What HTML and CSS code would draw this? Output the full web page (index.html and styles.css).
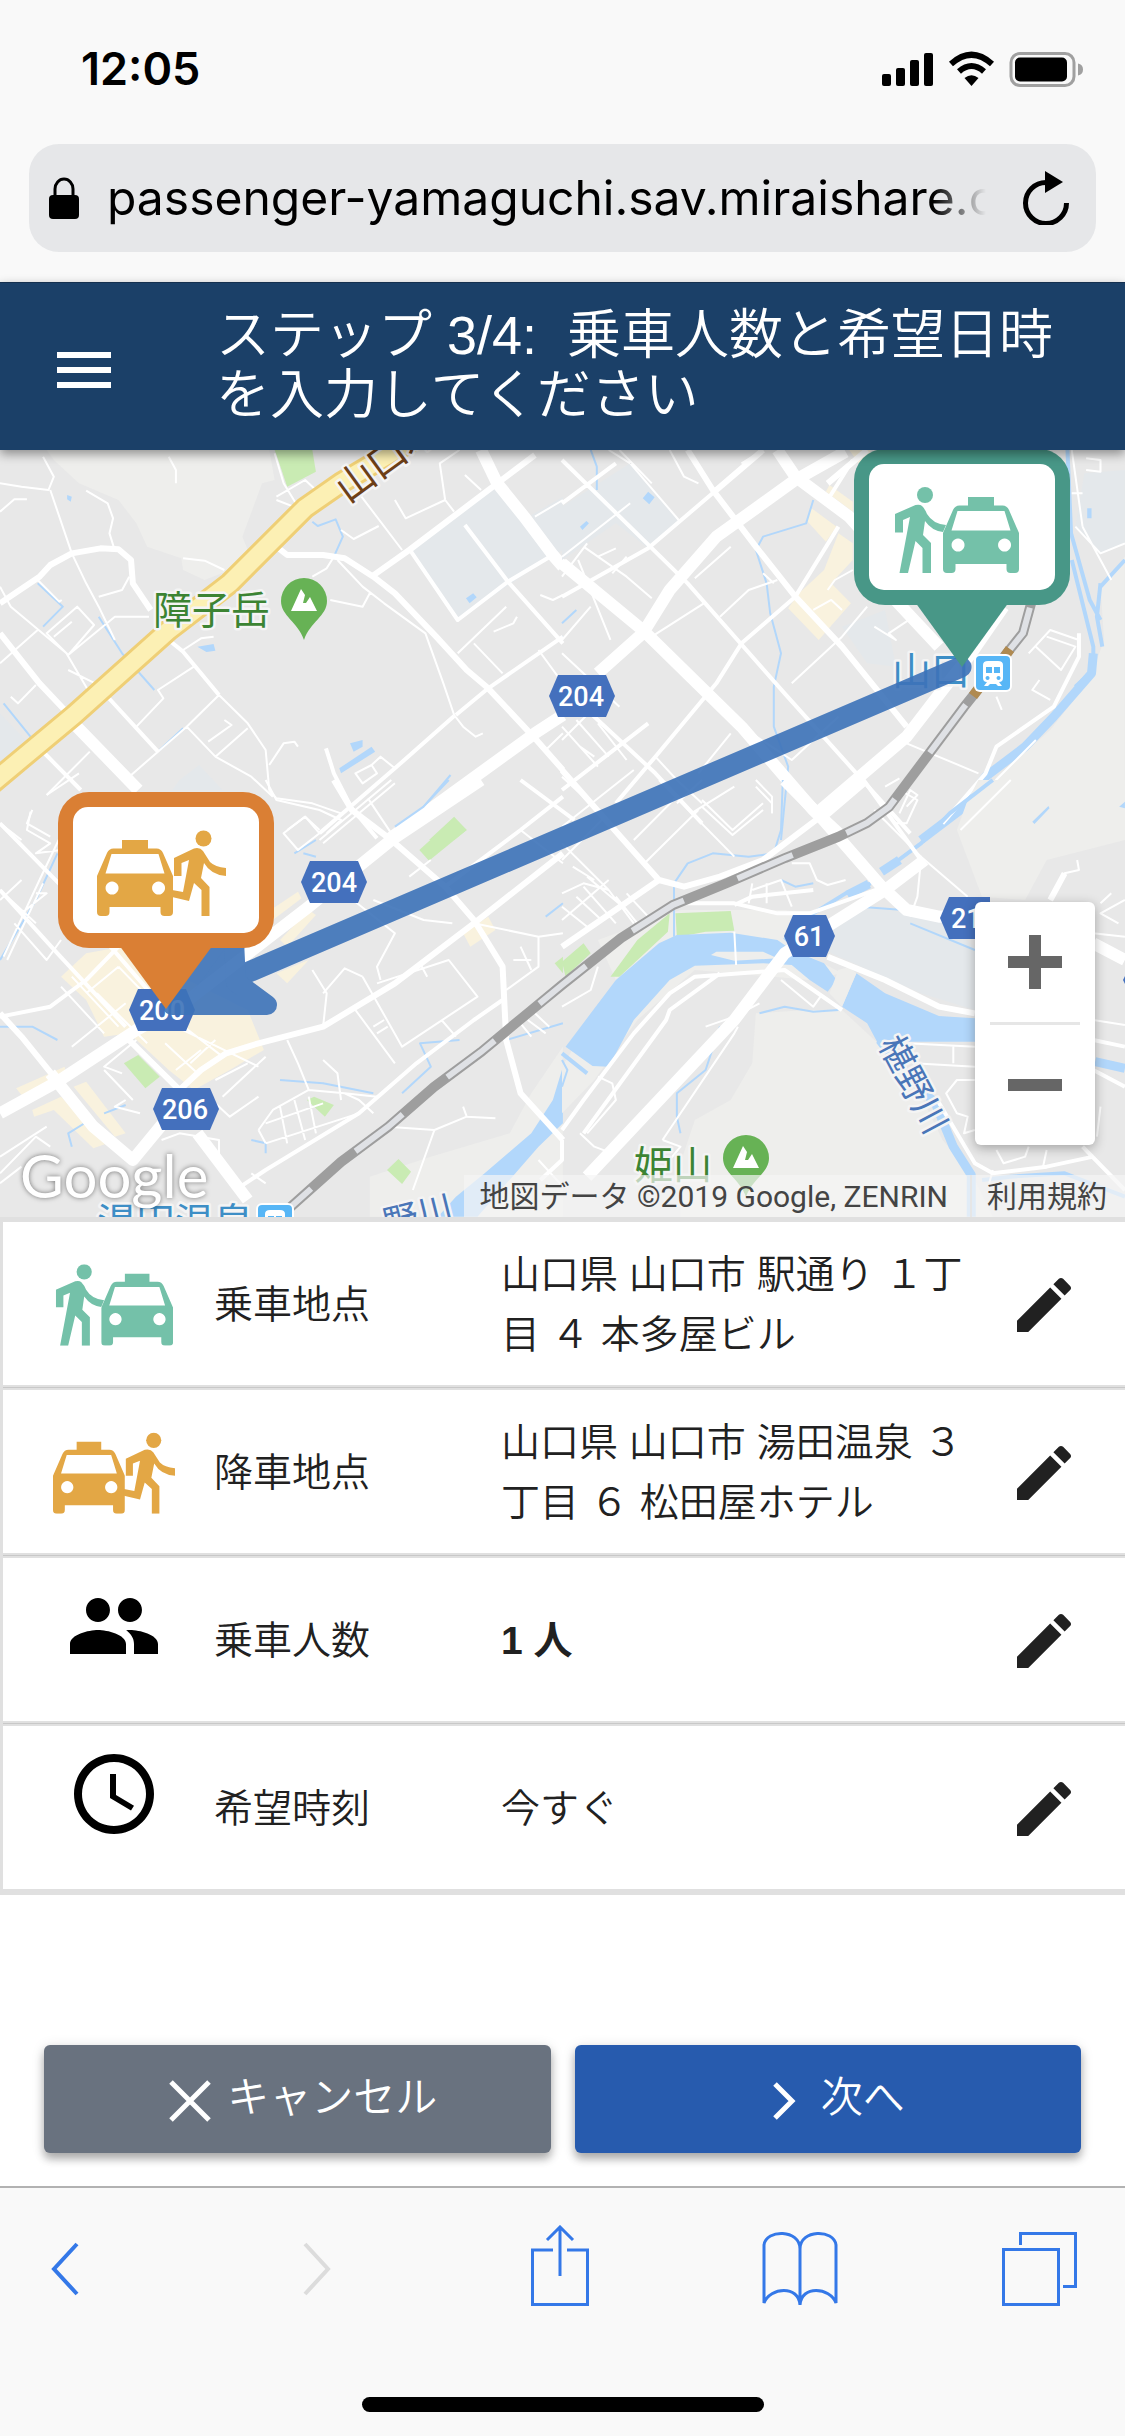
FILE: index.html
```html
<!DOCTYPE html>
<html lang="ja">
<head>
<meta charset="utf-8">
<meta name="viewport" content="width=device-width">
<title>ステップ 3/4</title>
<link rel="stylesheet" href="styles.css">
</head>
<body>
<svg class="defs" aria-hidden="true">
  <symbol id="car" viewBox="0 0 76 86">
    <path fill-rule="evenodd" d="M25 10H51V18.500H59.500Q64 18.500 66 23L76 46V82Q76 86 72 86H67.500Q63.500 86 63.500 82V77H12.500V82Q12.500 86 8.500 86H4Q0 86 0 82V46L10 23Q12 18.500 16.500 18.500H25ZM14.500 24L8.500 43.500H67.500L61.500 24ZM15 51.500a6.500 6.500 0 1 0 .1 0ZM61.500 51.500a6.500 6.500 0 1 0 .1 0Z"/>
  </symbol>
  <symbol id="ride" viewBox="0 0 124 86">
    <use href="#car" x="48" y="0" width="76" height="86"/>
    <circle cx="30" cy="8" r="8"/>
    <path d="M0 27L20.500 18Q25 17 27 19Q30 22 32 27Q38 37 51 38L48 45Q37 44 30 34L28 48L36 56V86H27.500V61L20.500 54L13 86H4.500L15 30L8 33V45.500H0Z"/>
  </symbol>
  <symbol id="leave" viewBox="0 0 129 86">
    <use href="#car" x="0" y="0" width="76" height="86"/>
    <circle cx="106.500" cy="8.500" r="8"/>
    <path d="M77 28L97 18.500Q103 17 106 21L113 32Q118 37 129 38V46Q114 45 107 33L104 48L112.500 57V86H104.500V60L97 53L92 71L75 67V60L86 62L92 30L84.500 33V46H77Z"/>
  </symbol>
  <symbol id="edit" viewBox="0 0 24 24">
    <path d="M3 17.250V21h3.750L17.810 9.940l-3.750-3.750L3 17.250zM20.710 7.040c.39-.39.39-1.020 0-1.410l-2.340-2.340c-.39-.39-1.020-.39-1.410 0l-1.830 1.830 3.750 3.750 1.830-1.830z"/>
  </symbol>
  <symbol id="peak" viewBox="0 0 46 62">
    <path d="M23 0a23 23 0 0 1 23 23c0 15-17 21-23 39c-6-18-23-24-23-39a23 23 0 0 1 23-23z" fill="#67b255"/>
    <path d="M10 33L20 11L24 17L22 25L25 25L29 19L36 33z" fill="#fff"/>
  </symbol>
  <symbol id="train" viewBox="0 0 34 34">
    <rect width="34" height="34" rx="4" fill="#57b6f6"/>
    <path fill-rule="evenodd" fill="#fff" d="M7 9Q7 5 12 5H22Q27 5 27 9V22Q27 26 23 26L26 30H22L20 28H14L12 30H8L11 26Q7 26 7 22ZM10 11V17H16V11ZM18 11V17H24V11ZM11.500 20a2 2 0 1 0 .1 0ZM22.500 20a2 2 0 1 0 .1 0Z"/>
  </symbol>
</svg>

<header class="browser-top">
  <div class="status">
    <span class="clock">12:05</span>
    <svg class="status-icons" viewBox="0 0 202 36" aria-hidden="true">
      <rect x="0" y="23" width="9" height="12" rx="2"/><rect x="14" y="17" width="9" height="18" rx="2"/>
      <rect x="28" y="9" width="9" height="26" rx="2"/><rect x="42" y="2" width="9" height="33" rx="2"/>
      <path d="M89.500 35L82.500 27Q89.500 21.500 96.500 27Z"/>
      <g fill="none" stroke="#000" stroke-width="6"><path d="M77 20.500Q89.500 9.500 102 20.500"/><path d="M69 13Q89.500 -5.500 110 13"/></g>
      <rect x="129" y="2.500" width="63" height="32" rx="9" fill="none" stroke="#a0a0a0" stroke-width="3"/>
      <rect x="133" y="6.500" width="52" height="24" rx="5"/>
      <path d="M196 12.500q5 1 5 6t-5 6z" fill="#a0a0a0"/>
    </svg>
  </div>
  <div class="address">
    <svg class="lock" viewBox="0 0 30 42" aria-hidden="true"><rect y="18" width="30" height="24" rx="4"/><path d="M6 20V12a9 10 0 0 1 18 0V20" fill="none" stroke="#000" stroke-width="3"/></svg>
    <input class="url" type="text" aria-label="アドレス" value="passenger-yamaguchi.sav.miraishare.c" readonly>
    <button class="reload" type="button" aria-label="再読み込み">
      <svg viewBox="0 0 48 54"><path d="M24 11.500A20.500 20.500 0 1 0 44.500 32" fill="none" stroke="#000" stroke-width="5"/><path d="M23 0L41 11L23 22Z"/></svg>
    </button>
  </div>
</header>

<header class="app-bar">
  <button class="menu" type="button" aria-label="メニュー"><svg viewBox="0 0 24 24"><path d="M3 18h18v-2H3v2zm0-5h18v-2H3v2zm0-7v2h18V6H3z"/></svg></button>
  <h1>ステップ 3/4:&nbsp; 乗車人数と希望日時を入力してください</h1>
</header>

<main>
<section class="map" aria-label="地図">
<svg class="map-canvas" viewBox="0 450 1125 767">
  <rect y="450" width="1125" height="767" fill="#e8e8e8"/>

  <!-- north-west -->
  <g class="tile" transform="translate(0 440) scale(.359 .33333)">
    <path class="hill" d="M130 30H750L765 120L730 130L675 290L690 330L640 390L570 420L510 390L505 355L410 320L380 250L330 180L220 130L150 60Z"/>
    <path class="park" d="M765 30H870L880 95L800 140L775 60ZM1195 1200L1265 1130L1300 1170L1265 1200Z"/>
    <path class="block" d="M1145 330L1380 135L1540 345L1275 540ZM1480 225L1568 170V330L1540 345ZM0 820L80 910L0 980ZM500 1020L555 975L620 1050H480Z"/>
    <path class="stream" d="M870 245L885 258L935 238L955 290L930 350M105 430L175 500L120 560M275 530L340 640L430 750M10 790L85 890M445 930L510 865M1255 1005L1180 1100L1115 1160M1370 740L1568 590"/>
    <path class="water" d="M550 620L595 612L600 632L575 636ZM945 985L1035 920L1045 935L950 1000ZM975 910L1010 900V920L985 935ZM1298 475L1318 460L1328 472L1308 490ZM187 165L200 170L197 185L187 178Z"/>
    <path class="r3" d="M0 130L60 140L135 150L150 110L120 50M0 215L40 178H75M140 150L200 340L240 430L275 500L320 600M240 152L300 190L315 235L305 280L318 325M470 50L490 90V130M105 420L165 485L172 480M0 440L30 500L185 640L245 750M0 670L105 570M130 580L215 500L262 555L190 645ZM190 645L320 530H415M150 590L200 545M30 770L50 790L100 735M360 1010L440 935L520 860L610 765M610 765L690 850L740 930L750 1050L770 1075L870 1090L950 1120M520 860L600 950L700 1010L760 1070M600 950L690 865M380 860L455 775L440 750L540 680M130 1065L250 935M580 905L645 855L625 840M750 975L790 910L820 905L830 920M510 355L570 362L625 390M275 470L340 450L360 410M510 630L560 595L595 590M190 690L265 730M940 360L1010 440L1070 490L1185 580L1205 640L1235 730L1265 825L1290 860L1325 890L1345 880M1000 160L1120 330M950 270L985 297L1055 258M1100 180L1130 235L1240 180L1265 215M1240 180L1225 70L1280 30M870 410L910 385L930 350M920 480L1010 500L1030 460M1320 610L1400 700M1275 640L1410 500M1375 575L1430 550L1440 530M1500 630L1568 730M1490 230L1568 180M1295 105L1340 150M1025 1075L1090 1180M990 1000L1035 975L1050 1000L1010 1030ZM1035 975L1060 950L1100 985M770 170L850 120L900 170M765 40L790 130L830 200M770 180L830 205M800 1170L850 1130L890 1170M1505 465L1540 480L1568 465M1520 930L1568 880M0 1150L60 1200M90 1110L75 1150L140 1190"/>
    <path class="r4" d="M890 1180L1100 985L1265 828M1270 825L1360 745L1568 590M115 930L225 1050M295 765L440 935M470 600L510 635L610 765M1145 335L1275 540L1415 425L1540 345M1295 255L1415 425L1568 610M908 925L930 1000L980 1105L1050 1195"/>
    <path class="r6" d="M0 490L110 410L140 375L200 340L280 325L330 328L365 360L370 430L420 510M0 580L110 730L180 810M770 320L800 345H900L960 355L1040 410L1100 460L1215 590L1300 690L1360 745L1490 895L1568 990M1035 410L1140 330L1385 130L1490 45"/>
    <path class="r12" d="M205 850L385 1050M1340 30L1385 130L1460 230L1540 345L1568 380M1080 1200L1490 880L1568 825"/>
  </g>

  <!-- north-east -->
  <g class="tile" transform="translate(562 440) scale(.359 .33333)">
    <path class="block" d="M0 200L190 70L325 240L240 325L150 250L0 360ZM1455 100L1568 90V310L1495 340L1430 260ZM780 560L900 510L930 680L850 670Z"/>
    <path class="hill" d="M1568 350L1500 440L1510 600L1470 720L1360 870L1210 1010L1110 1200H1568Z"/>
    <path class="shop" d="M735 155L745 135L810 185V215ZM695 205L765 260L735 305L680 240ZM770 280L810 310V360L750 430L805 490L715 600L630 505L660 460L730 390ZM800 30H860L840 90Z"/>
    <path class="stream" d="M700 180L680 250L560 290L540 330L570 430L580 520L610 640L590 740V860L630 980L610 1200M80 30L97 80V150M0 550L40 510"/>
    <path class="stream wide" d="M1408 30L1418 280L1470 480L1500 540M1500 430L1490 530L1505 620M1420 360L1480 620V690L1430 740M1568 360L1500 440"/>
    <path class="stream wider" d="M1480 640L1475 700L1370 830L1290 920L1180 1010L1110 1110L1000 1200"/>
    <path class="water" d="M225 175L240 155L258 172L243 193ZM50 260L68 243L75 250L57 270ZM1463 205H1475V235H1463ZM1310 1145L1355 1098L1358 1105L1316 1152ZM1552 1100L1562 1085V1100Z"/>
    <path class="r3" d="M190 70L325 240M0 350L190 190M60 320L180 410L250 475M100 350L150 325M70 310L0 410M45 360L135 600M140 400L180 350M250 590L395 490M370 415L470 320M440 530L520 450L600 420M560 400L590 430M640 730L780 590L850 500M770 830L640 960L500 860L470 830M810 1020L960 890M960 910L1160 1000M0 900L130 760M0 860L100 980M50 920L90 950M100 850L180 960M380 1000L470 880M260 950L320 1020L390 1090M0 1010L90 1100M40 840L130 950M0 640L100 740L160 800M0 600L80 500M320 1090L390 1020M390 1080L475 1170L560 1090M540 1020L585 1070V1120M130 30L190 70M160 30L250 130M300 30L340 110L380 130M500 70L560 30M420 150L540 320M870 560L930 600L910 580L980 530M900 1040L940 1015M960 1100L990 1065L970 1050L940 1120M1330 720L1310 750L1360 780M1210 770L1225 810M1300 640L1360 570L1440 600M1320 620L1390 690L1430 620L1350 590M1430 260L1500 340L1568 310M1450 260L1530 420M1420 30L1450 260M1460 90L1500 95V60L1460 55M1420 160H1450M1250 1080L1200 1030L1320 900M700 510L750 480L780 510M740 450L760 420L810 390"/>
    <path class="r4" d="M0 60L350 430L620 760L870 1060L970 1180M0 740L260 1000L390 1150M0 470L240 325L430 150M0 1050L240 850M770 260L650 470L500 610L430 730L260 950L150 1090M0 190L150 70M810 60L740 180M1440 580V650L1370 800L1210 920L1180 1000L1060 1150"/>
    <path class="r6" d="M350 30L420 150L540 320L650 470L780 620L960 860M430 150L560 30M740 130L850 30"/>
    <path class="r12" d="M0 370L230 575L500 860L700 1110L790 1200M100 700L225 580L300 450L430 290L650 120L790 35M600 30L650 110L800 230L850 290M720 1110L960 890L1060 750L1140 640L1230 500M850 390L1050 620"/>
  </g>

  <!-- south-west -->
  <g class="tile" transform="translate(0 780) scale(.359 .33333)">
    <path class="hill" d="M1030 1190L1200 1130L1420 1060L1480 940L1568 800V1310H1030Z"/>
    <path class="shop" d="M170 590L240 520L340 500L560 620L690 690L735 810L640 870L540 930L470 870L360 760L290 770L240 660ZM45 925L180 860L185 885L60 945ZM205 920L240 905L350 1060L320 1070ZM90 990L170 950L300 1090L260 1105L150 990L95 1010ZM740 400L830 335L840 355L760 420ZM780 480L860 390L880 405L800 500ZM770 580L860 540L800 610ZM1290 460L1360 410L1380 450L1310 500Z"/>
    <path class="park" d="M1168 210L1265 115L1300 150L1195 242ZM345 850L385 825L445 890L405 925ZM855 960L875 950L930 975L905 1010ZM1078 1170L1110 1137L1145 1175L1120 1212ZM1545 550L1568 530V580Z"/>
    <path class="water" d="M1568 860L1540 960L1480 1060L1350 1180L1270 1250L1220 1310H1330L1500 1100L1568 1030Z"/>
    <path class="stream" d="M0 740L90 740L160 780M290 1000L350 975M780 900L900 910L1040 940M160 220L100 360L0 540M200 1100L190 1060L250 1020M1120 940L1200 860L1170 790L1280 780M740 1120V1090L700 1080M845 220L880 230M880 180L820 220M1250 0L1180 80L1100 140M1520 410L1568 370M1410 780L1568 730"/>
    <path class="r3" d="M130 45L220 -20M85 95L75 150L140 190L100 220L170 210M0 330L100 430M60 400L130 340L100 340M40 430L130 540L170 480M10 530L110 300L190 120M20 540L120 310M200 590L330 740M170 620L290 760M270 640L410 790M240 640L330 560M200 800L350 670M330 560L420 660M500 730L620 830M460 790L550 880M530 850L600 780M490 870L560 810M490 740L720 860M340 880L290 860L380 780M290 870L370 960M350 960L320 980L390 1000M600 900L690 850M560 930L640 1010L720 950M620 950L740 830M450 1080L500 1060L610 1080V1130M720 1050L760 990L860 930L960 940L1050 950M860 950L880 1060M820 960L850 1080M780 980L800 1090M740 1090L1000 1000M720 1050L740 1090M740 1030L900 970M900 840L940 880L950 960M960 940L1000 960L1040 1000M800 780L830 850L860 930M1050 610L1250 540L1330 650L1120 800L1010 590M1010 590L960 565L900 640M870 570L910 640L900 740M990 690L1100 850M1040 740L1070 720M1050 760L1080 740M1230 720L1270 770M1170 550L1190 590M1320 430L1500 470V560L1410 630M1430 540H1480M1450 500L1480 570M1568 460L1500 470M960 340L1100 460L1050 560L1060 600M1040 360L1180 420L1260 430M1450 150L1568 250M1140 290L1200 240M790 160L850 110L890 160L830 210ZM910 160L950 120L890 90L770 60L740 0M890 180L1090 0M900 190L1100 10M0 1130L130 1040M0 1180L100 1070L140 1100M0 1210L60 1160M60 300L0 360M1150 1230L1210 1050L1300 1010L1380 1015M1080 1040L1210 1050M1290 980L1300 1010M1500 1140L1568 1220M1470 720L1520 760M1490 700L1530 740M1450 730L1480 770M700 1180L740 1210"/>
    <path class="r4" d="M0 330L160 520L350 740M0 710L140 680L240 600L330 500M300 490L420 640M0 130L200 350M1240 320L1450 150L1568 50M670 1220L740 1170L1000 1000L1160 850L1320 720L1400 660M1450 0L1600 120"/>
    <path class="r6" d="M350 770L500 930L560 870L630 820L720 790L900 740L1100 610L1320 430L1568 220M930 0L980 90L1090 180L1240 320L1320 420L1400 560L1410 780L1450 940L1568 1080M0 700L60 770L150 890"/>
    <path class="r12" d="M0 1000L160 905L380 750L500 680L860 380L1090 180L1340 0M140 880L260 1040L370 1140L500 970M550 1060L690 1260"/>
  </g>

  <!-- south-east -->
  <g class="tile" transform="translate(562 780) scale(.359 .33333)">
    <path class="hill" d="M540 700L680 690L780 690L880 790L960 860L1060 1080L1140 1180L1200 1310H330V1150L370 1020L470 960L530 850ZM1100 150L1130 60L1160 0H1568V180L1350 240L1290 360L1170 350ZM0 860L150 600L100 480L330 390L620 390L690 400L640 500L780 580L690 600L370 570L210 720L90 900L0 1000Z"/>
    <path class="block" d="M750 520L700 450L850 380L960 400L1060 420L1150 500V690L1000 640Z"/>
    <path class="park" d="M135 590L210 480L300 400L295 455L160 590ZM316 400L470 393L480 452L400 455L320 472ZM0 545L60 490L80 520L10 590Z"/>
    <path class="water" d="M10 800L150 600L270 490L320 465L470 458L600 480L640 510L730 550L765 600L740 635L690 600L640 555L560 550L370 557L300 600L200 720L130 860L85 858ZM820 580L900 640L1050 708L1150 715V785H960L885 800L850 730L780 680Z"/>
    <path class="hill" d="M415 525L430 515L560 515L600 535L480 542ZM770 570L800 560L820 580L780 680L745 640Z"/>
    <path class="stream" d="M615 0L610 150L590 220L520 230L420 220L350 250L312 310V470M970 430L1150 510M550 700L620 680L700 695L770 690M440 740L400 870L320 940V1010L330 1060M0 840L15 870L0 920M830 380L950 390M610 300L650 320L700 310"/>
    <path class="stream wide" d="M1200 0L1080 100L1000 190L900 270M860 310L790 340L700 400L620 480M0 820L70 880M1170 1200L1250 1190L1400 1180L1568 1250"/>
    <path class="stream wider" d="M890 275L940 240M795 345L855 312M885 780L950 870L1040 970L1090 1100L1140 1185V1310M1485 845L1568 865"/>
    <path class="water" d="M1310 125L1355 78L1358 85L1316 132ZM1552 80L1568 65V85Z"/>
    <path class="r3" d="M530 330L610 300L640 380M530 310L520 370M570 310V370M640 250L690 250L710 300L740 315L790 300M610 600L700 680L720 650M870 90L1000 230L1130 350M1000 240L990 350L970 410M400 740L480 710L550 670M280 1080L480 760L490 740M100 890L140 910L150 960L70 1060M50 1060L90 1100L140 1120M280 1080L330 1100L300 1140M0 340L60 310L130 330L200 430M70 290L180 390M0 420L130 300M60 320L150 430M40 350L110 420M0 380L70 440M150 350L210 430M180 340L240 410M90 300L30 260M360 100L480 20M390 80L475 165L560 90M540 20L585 70V100M200 180L320 50M230 250L380 90M270 0L480 230M0 240L120 110M0 140L200 -30M0 190L130 330M480 455L485 555M100 560L80 630L0 680M1360 360L1400 280L1440 270L1435 240M1568 360L1500 400L1550 430M1500 370L1530 340M1480 460L1568 470M1480 720L1568 735M960 790L1150 800M980 850L1150 860M1090 800V850M1150 900L1100 900L1070 940L1100 1000L1130 1010L1120 1060L1150 1050M1210 1110L1230 1150L1290 1130L1300 1100M1340 1160L1350 1110M1190 1210L1200 1170M1490 1070L1500 980M680 220L720 180M930 130L960 130L990 60L940 30M1110 150L1250 0"/>
    <path class="r4" d="M0 1050L60 960L200 760L300 640L370 590L620 570L780 690M60 1060L290 720L300 690L440 580M340 370L480 370L600 400H690L900 320M480 375L530 350L700 330M1040 950L1150 1150L1200 1180L1350 1160L1480 1130M1450 1100L1568 1230M0 1080V1140L-60 1200M840 0L1000 240M1480 780L1568 800M1480 870L1568 920"/>
    <path class="r6" d="M0 -30L130 130L270 300L340 320L440 290L560 240L720 110M0 500L270 300M740 530L900 600L1050 680L1150 700M1360 360L1400 280"/>
    <path class="r12" d="M70 1190L480 720L620 520L900 330L1010 240M620 0L720 110L890 320L960 390L1050 410L1150 405M720 110L840 0M1480 490L1568 540"/>
  </g>

  <!-- highway -->
  <g fill="none">
    <path d="M-10 785L74 715L169 630L230 583L305 508L341 483L413 440" stroke="#efcf76" stroke-width="23"/>
    <path d="M-10 785L74 715L169 630L230 583L305 508L341 483L413 440" stroke="#fcf0b4" stroke-width="17"/>
  </g>
  <!-- railway -->
  <g fill="none">
    <path d="M1032 600L1023 633L1007 653L964 707L907 783L889 807L867 823L838 837L785 858L727 883L673 905L621 938L562 985L528 1013L481 1052L434 1087L388 1127L341 1162L285 1212" stroke="#9e9e9e" stroke-width="10"/>
    <path d="M1032 600L1023 633L1007 653L964 707L907 783L889 807L867 823L838 837L785 858L727 883L673 905L621 938L562 985L528 1013L481 1052L434 1087L388 1127L341 1162L285 1212" stroke="#dfe1e5" stroke-width="6" stroke-dasharray="60 58" stroke-dashoffset="-8"/>
    <path d="M1010 649L1005 656M979 688L973 696" stroke="#b08a50" stroke-width="10"/>
  </g>

  <!-- place names -->
  <g class="halo">
    <text class="place green" x="153" y="624">障子岳</text>
    <text class="place green" x="634" y="1179">姫山</text>
    <text class="place blue" x="892" y="685">山口</text>
    <text class="place blue" x="97" y="1236">湯田温泉</text>
    <text class="place brown" transform="translate(348 504) rotate(-36)">山口本町</text>
    <text class="place river" transform="translate(878 1044) rotate(62)">椹野川</text>
    <text class="place river" transform="translate(387 1236) rotate(-14)">野川</text>
  </g>
  <use href="#peak" x="281" y="578" width="46" height="62"/>
  <use href="#peak" x="723" y="1135" width="46" height="62"/>
  <rect x="974" y="654" width="38" height="38" rx="6" fill="#fff"/>
  <use href="#train" x="976" y="656" width="34" height="34"/>
  <rect x="256" y="1203" width="38" height="38" rx="6" fill="#fff"/>
  <use href="#train" x="258" y="1205" width="34" height="34"/>

  <!-- route shields -->
  <g fill="#4470bd">
    <path d="M549 696L558 675H606L615 696L606 717H558Z"/>
    <path d="M301 882L310 861H358L367 882L358 903H310Z"/>
    <path d="M129 1010L138 989H186L195 1010L186 1031H138Z"/>
    <path d="M153 1109L162 1088H210L219 1109L210 1130H162Z"/>
    <path d="M784 936L793 915H826L835 936L826 957H793Z"/>
    <path d="M940 918L949 897H990V939H949Z"/>
    <path d="M1123 980L1130 966V994Z"/>
  </g>
  <g class="shield">
    <text x="581" y="706">204</text><text x="334" y="892">204</text><text x="162" y="1020">200</text>
    <text x="185" y="1119">206</text><text x="809" y="946">61</text><text x="974" y="928">213</text>
  </g>

  <!-- trip line -->
  <g opacity=".9" fill="#3d73b9" stroke="#3d73b9" stroke-linejoin="round" stroke-linecap="round">
    <path d="M961 667L230 980" stroke-width="21"/>
    <path d="M172 1005H267L236 982L233 920Z" stroke-width="20"/>
  </g>

  <!-- pins -->
  <g fill="#489787"><rect x="854" y="449" width="216" height="156" rx="31"/><path d="M915 602H1009L962 667Z"/></g>
  <rect x="869" y="464" width="186" height="126" rx="15" fill="#fff"/>
  <use href="#ride" x="895" y="487" width="124" height="86" fill="#74c1a9"/>
  <g fill="#da7f34"><rect x="58" y="792" width="216" height="156" rx="31"/><path d="M119 945H213L166 1009Z"/></g>
  <rect x="73" y="807" width="186" height="126" rx="15" fill="#fff"/>
  <use href="#leave" x="97" y="830" width="129" height="86" fill="#e3a745"/>
</svg>
  <span class="brand">Google</span>
  <div class="zoom-control">
    <button type="button" aria-label="拡大"><svg viewBox="0 0 54 54"><path d="M21 0H33V21H54V33H33V54H21V33H0V21H21Z"/></svg></button>
    <button type="button" aria-label="縮小"><svg viewBox="0 0 54 54"><path d="M0 21H54V33H0Z"/></svg></button>
  </div>
  <div class="credits"><span>地図データ ©2019 Google, ZENRIN</span><a href="#terms">利用規約</a></div>
</section>

<table class="trip">
  <tbody>
    <tr>
      <td class="icon"><svg class="taxi" viewBox="-3 0 129 86" fill="#74c1a9"><use href="#ride" x="0" y="0" width="124" height="86"/></svg></td>
      <th scope="row">乗車地点</th>
      <td class="value">山口県 山口市 駅通り １丁目 ４ 本多屋ビル</td>
      <td class="edit"><button type="button" aria-label="乗車地点を編集"><svg><use href="#edit"/></svg></button></td>
    </tr>
    <tr>
      <td class="icon"><svg class="taxi" viewBox="0 0 129 86" fill="#e3a745"><use href="#leave" x="0" y="0" width="129" height="86"/></svg></td>
      <th scope="row">降車地点</th>
      <td class="value">山口県 山口市 湯田温泉 ３丁目 ６ 松田屋ホテル</td>
      <td class="edit"><button type="button" aria-label="降車地点を編集"><svg><use href="#edit"/></svg></button></td>
    </tr>
    <tr>
      <td class="icon glyph"><svg viewBox="0 0 24 24"><path d="M16 11c1.660 0 2.990-1.340 2.990-3S17.660 5 16 5c-1.660 0-3 1.340-3 3s1.340 3 3 3zm-8 0c1.660 0 2.990-1.340 2.990-3S9.660 5 8 5C6.340 5 5 6.340 5 8s1.340 3 3 3zm0 2c-2.330 0-7 1.170-7 3.500V19h14v-2.500c0-2.330-4.670-3.500-7-3.500zm8 0c-.29 0-.62.020-.97.050 1.160.84 1.970 1.970 1.970 3.450V19h6v-2.500c0-2.330-4.670-3.500-7-3.500z"/></svg></td>
      <th scope="row">乗車人数</th>
      <td class="value"><b>1 人</b></td>
      <td class="edit"><button type="button" aria-label="乗車人数を編集"><svg><use href="#edit"/></svg></button></td>
    </tr>
    <tr>
      <td class="icon glyph"><svg viewBox="0 0 24 24"><path d="M11.990 2C6.470 2 2 6.480 2 12s4.470 10 9.990 10C17.520 22 22 17.520 22 12S17.520 2 11.990 2zM12 20c-4.420 0-8-3.580-8-8s3.580-8 8-8 8 3.580 8 8-3.580 8-8 8z"/><path d="M12.500 7H11v6l5.250 3.150.75-1.230-4.500-2.670z"/></svg></td>
      <th scope="row">希望時刻</th>
      <td class="value">今すぐ</td>
      <td class="edit"><button type="button" aria-label="希望時刻を編集"><svg><use href="#edit"/></svg></button></td>
    </tr>
  </tbody>
</table>

<div class="actions">
  <button class="cancel" type="button"><svg viewBox="0 0 42 42"><path d="M2 2L40 40M40 2L2 40"/></svg>キャンセル</button>
  <button class="next" type="button"><svg viewBox="0 0 42 42"><path d="M12 4L29 21L12 38"/></svg>次へ</button>
</div>
</main>

<nav class="browser-bottom" aria-label="ブラウザ">
  <div class="tools">
    <button type="button" aria-label="戻る"><svg width="28" height="84" viewBox="0 0 28 84"><path d="M26 19L3 44L26 69" stroke-width="4"/></svg></button>
    <button type="button" aria-label="進む" disabled><svg width="28" height="84" viewBox="0 0 28 84"><path d="M2 19L25 44L2 69" stroke-width="4"/></svg></button>
    <button type="button" aria-label="共有"><svg width="58" height="84" viewBox="0 0 58 84"><path d="M22 25H1.500V79.500H56.500V25H36M29 51V2M16 15L29 2L42 15"/></svg></button>
    <button type="button" aria-label="ブックマーク"><svg width="76" height="84" viewBox="0 0 76 84"><path d="M38 80C37 60 8 62 2 78V20C4 4 38 4 38 24V80C39 60 68 62 74 78V20C72 4 38 4 38 24"/></svg></button>
    <button type="button" aria-label="タブ"><svg width="76" height="84" viewBox="0 0 76 84"><path d="M1.500 24.500H56.500V79.500H1.500ZM18.500 20V8.500H73.500V61.500H61"/></svg></button>
  </div>
  <div class="home"></div>
</nav>
</body>
</html>
```
FILE: styles.css
```css
* { box-sizing: border-box; }
body {
  margin: 0;
  background: #fff;
  color: #212121;
  font: 350 39px/60px "Liberation Sans", "Noto Sans CJK JP", sans-serif;
}
button { display: block; margin: 0; padding: 0; border: 0; background: none; color: inherit; font: inherit; }
svg { display: block; }
.defs { position: absolute; width: 0; height: 0; }

.browser-top { padding: 0 29px 30px; background: #f9f9f9; }
.status { display: flex; align-items: center; justify-content: space-between; height: 144px; padding: 0 12px 6px 52px; }
.clock { color: #000; font: 600 45px/54px Inter, sans-serif; }
.status-icons { width: 202px; height: 36px; }
.address {
  display: flex; align-items: center; height: 108px; padding: 0 26px 0 20px;
  border-radius: 30px; background: #e6e7e9;
}
.lock { width: 30px; height: 42px; }
.url {
  flex: 1; min-width: 0; margin: 0 36px 0 28px; padding: 0; border: 0; background: none;
  color: #000; font: 400 48px/60px Inter, sans-serif;
  mask-image: linear-gradient(to right, #000 94%, transparent 100%);
}
.reload svg { width: 48px; height: 54px; }

.app-bar {
  position: relative; z-index: 1; display: flex; align-items: center; gap: 96px;
  min-height: 168px; padding: 0 48px; border-top: 1px solid #15304f;
  background: #1b4068; color: #fff; box-shadow: 0 4px 10px rgba(0, 0, 0, .4);
}
.menu { padding-top: 6px; }
.menu svg { width: 72px; height: 72px; fill: #fff; }
.app-bar h1 { flex: 1; margin: 0; padding-bottom: 3px; font-size: 54px; line-height: 60px; font-weight: 350; }

.map { position: relative; overflow: hidden; }
.map-canvas { width: 100%; height: auto; }
.tile path { vector-effect: non-scaling-stroke; stroke-linejoin: round; }
.tile .hill { fill: #eeeeec; }
.tile .block { fill: #e4e8eb; }
.tile .park { fill: #c9ebb3; }
.tile .shop { fill: #f9f2de; }
.tile .water { fill: #b2d7fb; }
.tile .stream { fill: none; stroke: #b2d7fb; stroke-width: 2; }
.tile .wide { stroke-width: 4; }
.tile .wider { stroke-width: 9; }
.r3, .r4, .r6, .r12 { fill: none; stroke: #fff; }
.r3 { stroke-width: 2; }
.r4 { stroke-width: 4; }
.r6 { stroke-width: 6; }
.r12 { stroke-width: 12; }
.place { font: 400 39px "Noto Sans CJK JP", sans-serif; }
.halo { paint-order: stroke; stroke: #f4f4f4; stroke-width: 5; stroke-linejoin: round; }
.green { fill: #3c8433; }
.blue { fill: #3d8ec6; }
.brown { fill: #6d3f17; }
.river { fill: #4a76b8; font-size: 35px; }
.shield text { fill: #fff; font: 500 27px Roboto, sans-serif; text-anchor: middle; }
.brand {
  position: absolute; left: 20px; bottom: 9px; color: #fff;
  font: 400 60px/66px Lato, sans-serif; text-shadow: 0 0 5px rgba(0, 0, 0, .5);
}
.zoom-control {
  position: absolute; right: 30px; bottom: 72px; width: 120px; padding: 0 15px;
  border-radius: 6px; background: #fff; box-shadow: 0 3px 12px rgba(0, 0, 0, .3);
}
.zoom-control button { display: grid; place-items: center; width: 90px; height: 120px; }
.zoom-control button + button { height: 123px; border-top: 3px solid #e6e6e6; }
.zoom-control svg { width: 54px; height: 54px; fill: #666; }
.credits {
  position: absolute; right: 0; bottom: 0; display: flex; height: 42px;
  background: rgba(245, 245, 245, .7); color: #444;
  font: 400 30px/44px Roboto, "Noto Sans CJK JP", sans-serif;
}
.credits span { padding: 0 22px 0 16px; border-right: 2px solid #e6e6e6; }
.credits a { padding: 0 18px 0 15px; color: inherit; text-decoration: none; }

.trip {
  width: 100%; table-layout: fixed; border-collapse: separate; border-spacing: 0;
  border: 3px solid #e0e0e0; border-right: 0;
}
.trip th, .trip td {
  height: 168px; padding: 0; text-align: left; vertical-align: middle; font-weight: 350;
  border-top: 2px solid #e0e0e0; border-bottom: 1px solid #c8c8c8; box-shadow: inset 0 -2px #e0e0e0;
}
.trip tr:last-child > * { border-bottom-color: #e0e0e0; }
.trip .icon { width: 211px; padding-left: 50px; }
.trip .icon svg { width: 122px; height: 82px; }
.trip .glyph { padding: 0 0 30px 63px; }
.trip .glyph svg { width: 96px; height: 96px; fill: #000; }
.trip th { width: 287px; }
.trip .value { padding-right: 30px; }
.trip b { font-weight: 700; }
.trip .edit { width: 117px; }
.trip .edit svg { width: 72px; height: 72px; fill: #212121; }

.actions { display: grid; grid-template-columns: 1fr 1fr; gap: 24px; padding: 150px 44px 33px; }
.actions button {
  display: flex; align-items: center; justify-content: center; gap: 16px; height: 108px;
  padding: 0 0 3px 12px; border-radius: 6px; color: #fff; font-size: 42px;
  box-shadow: 0 6px 8px rgba(0, 0, 0, .28), 0 2px 14px rgba(0, 0, 0, .12);
}
.actions svg { width: 42px; height: 42px; margin-top: 6px; fill: none; stroke: #fff; stroke-width: 5; }
.actions .cancel { background: #69727f; }
.actions .next { background: #275bae; }

.browser-bottom { border-top: 2px solid #b2b2b2; background: #f9f9f9; padding: 37px 0 24px; }
.tools { display: grid; grid-template-columns: 252fr 228fr 231fr 240fr 76fr; padding: 0 47px 0 51px; }
.tools button { justify-self: start; }
.tools svg { fill: none; stroke: #3478e8; stroke-width: 3; }
.tools button:disabled svg { stroke: #dcdcdc; }
.home { width: 402px; height: 15px; margin: 88px auto 0; border-radius: 8px; background: #000; }
```
